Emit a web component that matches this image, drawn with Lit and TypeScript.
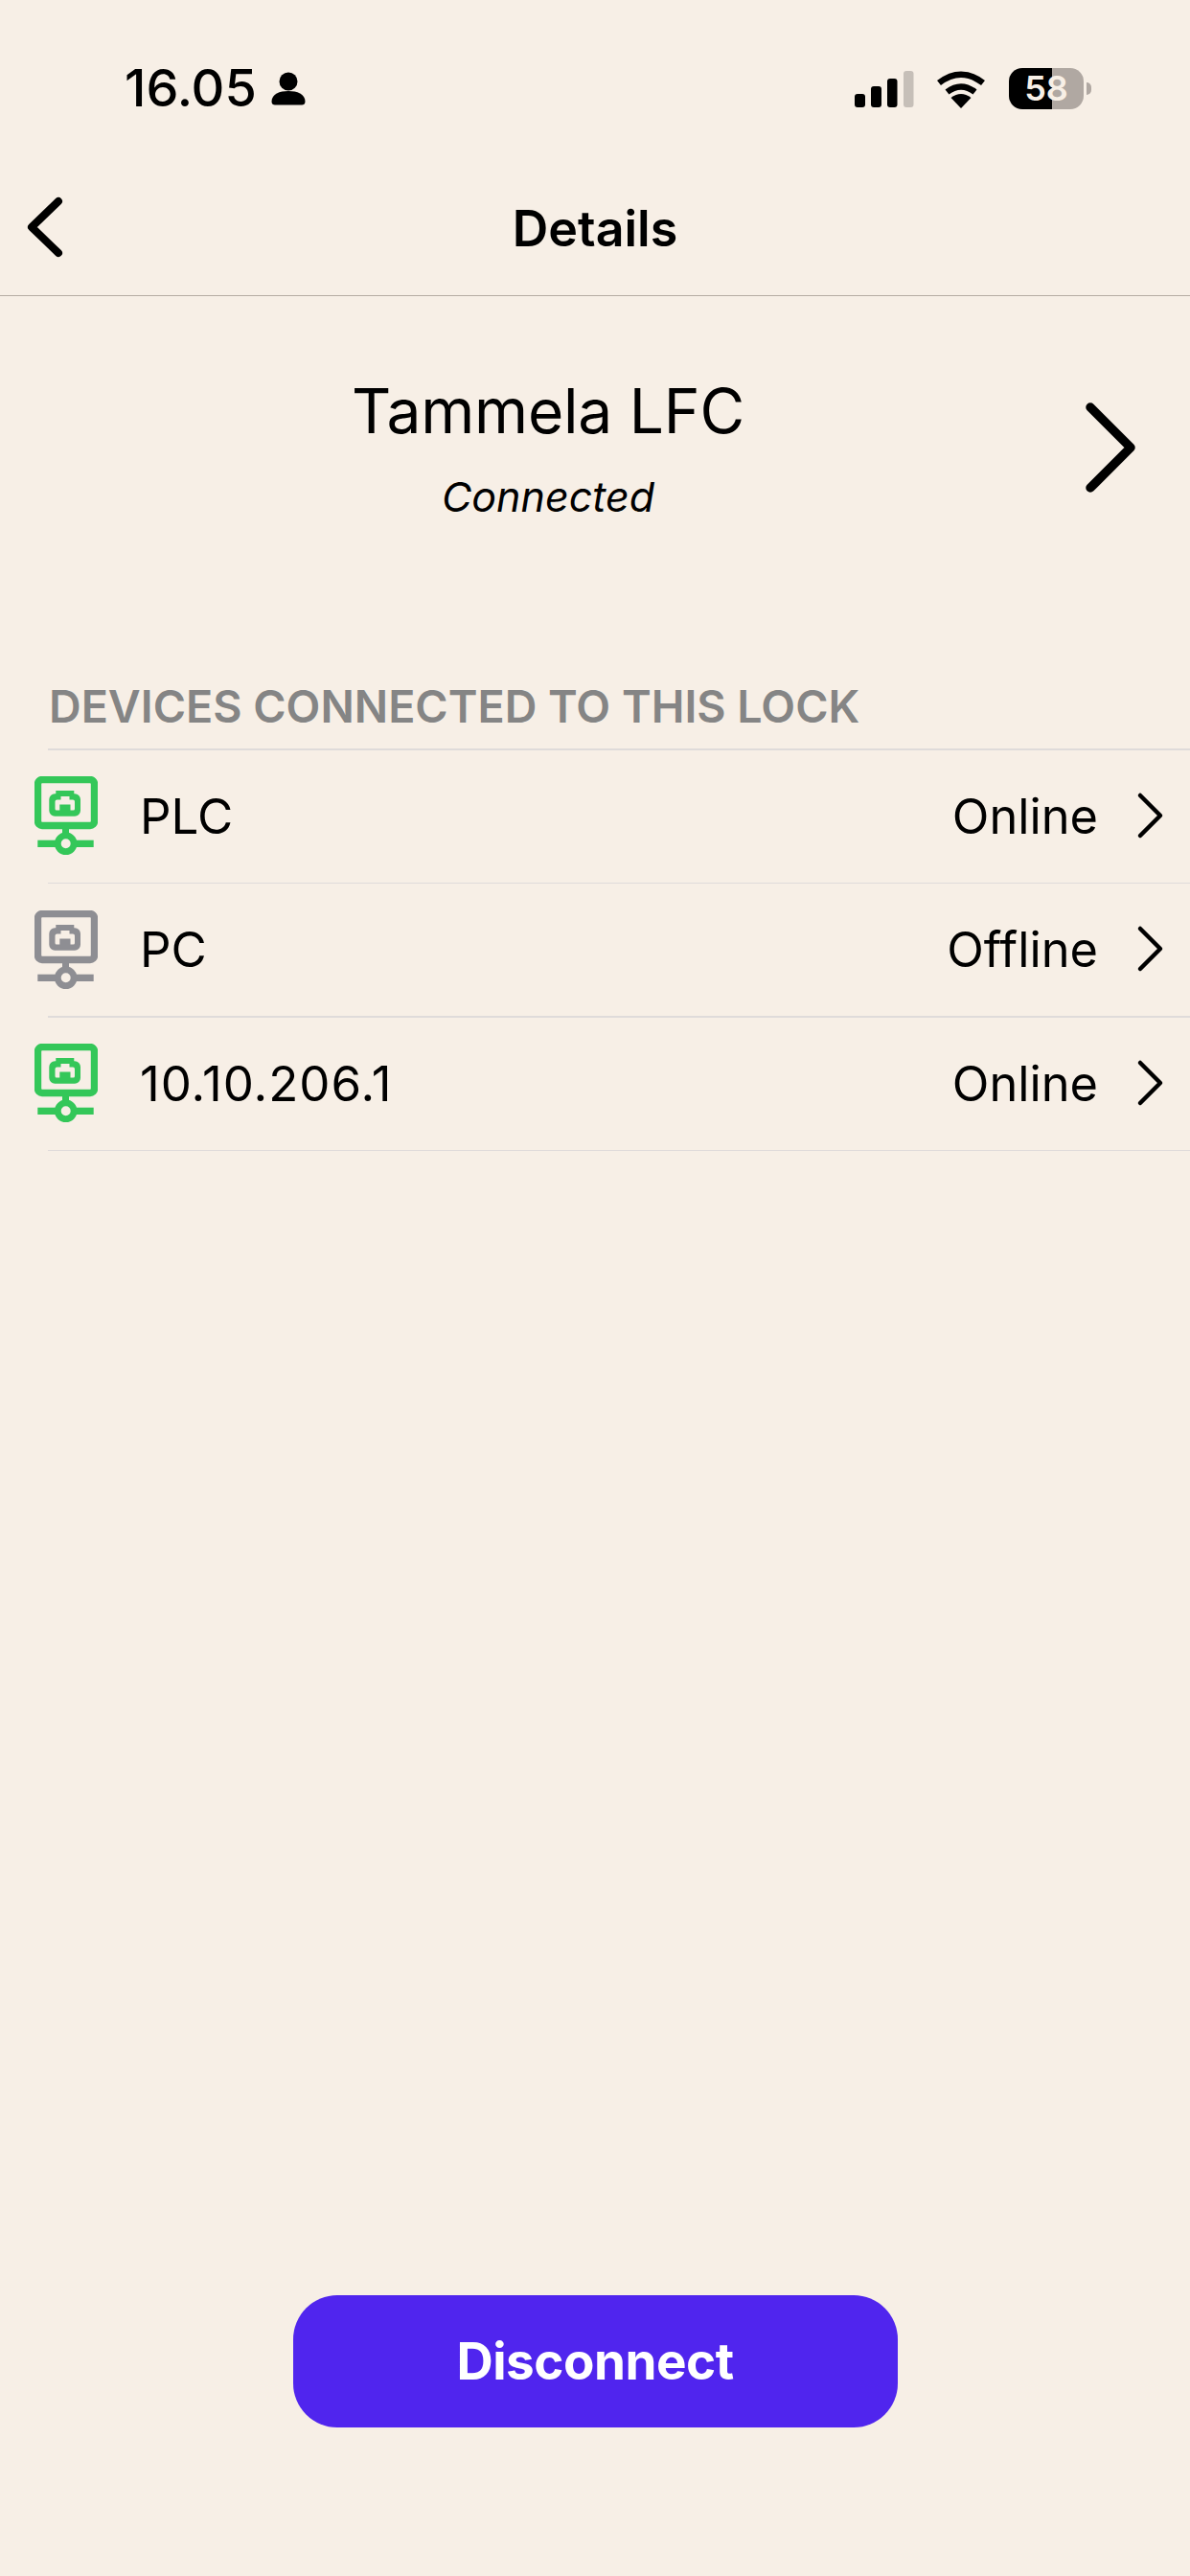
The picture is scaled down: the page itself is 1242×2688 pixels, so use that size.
import { LitElement, html, css, svg } from "lit";
import { customElement } from "lit/decorators.js";
import { classMap } from "lit/directives/class-map.js";

const chevron = (cls: string, d: string, sw: number, vb: string) => html`<svg class=${cls} viewBox=${vb} fill="none" stroke="#000" stroke-width=${sw} stroke-linecap="round" stroke-linejoin="round"><path d=${d}></path></svg>`;

const deviceIcon = (color: string) => html`<svg class="dev-icon" viewBox="0 0 66 84" fill="none">
  ${svg`
  <rect x="3.5" y="3.500" width="59" height="48" rx="4.500" stroke=${color} stroke-width="7.400"></rect>
  <rect x="29" y="54" width="7" height="12" fill=${color}></rect>
  <rect x="3.300" y="66.700" width="58.400" height="7.300" fill=${color}></rect>
  <circle cx="32.700" cy="70.300" r="8.400" fill="#F7EFE6" stroke=${color} stroke-width="6.800"></circle>
  <path fill=${color} fill-rule="evenodd" d="M22.300 15H41.300V18.300H42a6 6 0 0 1 6 6V35.700a6 6 0 0 1-6 6H21.300a6 6 0 0 1-6-6V24.300a6 6 0 0 1 6-6H22.300ZM27.500 21V24.500H23.500a2 2 0 0 0-2 2V34a1.500 1.500 0 0 0 1.500 1.500H26.300V29.500H37.500V35.500H40.500a1.500 1.500 0 0 0 1.500-1.500V26.500a2 2 0 0 0-2-2H36.500V21Z"></path>
  `}
</svg>`;

interface Device { name: string; status: string; online: boolean; numeric?: boolean; }

@customElement("app-root")
export class AppRoot extends LitElement {
  static styles = css`
    :host {
      display: flex;
      flex-direction: column;
      width: 1242px;
      min-height: 2688px;
      background: #f7efe6;
      color: #000;
      font-family: Inter, "Liberation Sans", sans-serif;
    }
    .status {
      display: flex;
      align-items: center;
      justify-content: space-between;
      box-sizing: border-box;
      height: 168px;
      padding: 60px 103px 44px 130px;
    }
    .status-left { display: flex; align-items: center; gap: 15px; }
    .time { font-size: 54px; font-weight: 500; line-height: 64px; }
    .person { width: 36px; height: 36px; margin-top: 2px; }
    .status-right { display: flex; align-items: center; }
    .signal { width: 62px; height: 38px; margin-top: 2px; }
    .wifi { width: 52px; height: 39px; margin-left: 23px; margin-top: 2px; }
    .battery {
      display: flex;
      align-items: center;
      justify-content: center;
      width: 78px;
      height: 43px;
      margin-left: 24px;
      border-radius: 14px;
      background: linear-gradient(to right, #000 58%, #b0a8a2 58%);
      color: #f7efe6;
      font-size: 36px;
      font-weight: 600;
    }
    .nub { width: 5px; height: 13px; margin-left: 3px; background: #b0a8a2; border-radius: 0 7px 7px 0; }
    .nav {
      display: flex;
      align-items: center;
      justify-content: center;
      box-sizing: border-box;
      height: 141px;
      border-bottom: 1.5px solid #b5aca3;
      position: relative;
    }
    .nav-title { font-size: 52px; font-weight: 600; }
    .back { position: absolute; left: 26px; top: 36px; width: 42px; height: 66px; }
    .lock {
      display: flex;
      align-items: center;
      padding-top: 80px;
    }
    .lock-text {
      display: flex;
      flex-direction: column;
      align-items: center;
      box-sizing: border-box;
      width: 1126px;
      padding-left: 18px;
    }
    .lock-name { font-size: 64px; font-weight: 400; line-height: 80px; letter-spacing: -0.2px; }
    .lock-state { font-size: 43px; font-style: italic; line-height: 52px; margin-top: 23px; }
    .lock-chev { width: 60px; height: 100px; margin-left: 3px; }
    .label {
      margin: 0;
      padding: 166px 0 0 51px;
      font-size: 46.600px;
      font-weight: 600;
      line-height: 54px;
      color: #858585;
    }
    .list { margin-top: 17px; }
    .row {
      display: flex;
      align-items: center;
      height: 139.500px;
      box-sizing: border-box;
      padding-left: 36px;
      position: relative;
    }
    .row::before {
      content: "";
      position: absolute;
      left: 50px;
      right: 0;
      top: 0;
      height: 1.500px;
      background: #dfdbda;
    }
    .row.last::after {
      content: "";
      position: absolute;
      left: 50px;
      right: 0;
      bottom: -1.500px;
      height: 1.500px;
      background: #dfdbda;
    }
    .dev-icon { width: 66px; height: 84px; flex: none; margin-top: 3px; }
    .dev-name { flex: 1; margin: 2px 0 0 44px; font-size: 51px; line-height: 60px; }
    .dev-name.numeric { letter-spacing: 1px; }
    .dev-status { margin-top: 2px; font-size: 50.500px; line-height: 60px; }
    .row-chev { width: 30px; height: 50px; margin: 0 26px 0 40px; }
    .spacer { flex: 1; }
    .footer { display: flex; justify-content: center; padding-bottom: 155px; }
    .disconnect {
      width: 631px;
      height: 138px;
      border: none;
      border-radius: 46px;
      background: #5025ee;
      color: #fff;
      font-family: inherit;
      font-size: 53px;
      font-weight: 700;
      letter-spacing: -0.5px;
    }
  `;

  private devices: Device[] = [
    { name: "PLC", status: "Online", online: true },
    { name: "PC", status: "Offline", online: false },
    { name: "10.10.206.1", status: "Online", online: true, numeric: true },
  ];

  render() {
    return html`
      <div class="status">
        <div class="status-left">
          <span class="time">16.05</span>
          <svg class="person" viewBox="0 0 36 36" fill="#000">
            <circle cx="18" cy="10" r="9.500"></circle>
            <path d="M0.500 31C0.500 23 9 20 18 20S35.500 23 35.500 31C35.500 33.500 34 34.500 32 34.500H4C2 34.500 .5 33.500 .5 31Z"></path>
          </svg>
        </div>
        <div class="status-right">
          <svg class="signal" viewBox="0 0 62 38">
            <rect x="0" y="24" width="11" height="14" rx="3"></rect>
            <rect x="17" y="16" width="11" height="22" rx="3"></rect>
            <rect x="34" y="8" width="10.500" height="30" rx="3"></rect>
            <rect x="51" y="0" width="10.500" height="38" rx="3" fill="#c6bfb8"></rect>
          </svg>
          <svg class="wifi" viewBox="0 0 52 39" fill="none">
            <path d="M3 12.500Q26 -5 49 12.500" stroke="#000" stroke-width="6.500"></path>
            <path d="M11.500 22Q26 11 40.500 22" stroke="#000" stroke-width="6.500"></path>
            <path d="M26 39L15.500 28Q26 20 36.500 28Z" fill="#000"></path>
          </svg>
          <div class="battery">58</div>
          <div class="nub"></div>
        </div>
      </div>
      <header class="nav">
        ${chevron("back", "M35 6L7 33L35 60", 8, "0 0 42 66")}
        <span class="nav-title">Details</span>
      </header>
      <section class="lock">
        <div class="lock-text">
          <span class="lock-name">Tammela LFC</span>
          <span class="lock-state">Connected</span>
        </div>
        ${chevron("lock-chev", "M9 8L51 50L9 92", 9.500, "0 0 60 100")}
      </section>
      <h2 class="label">DEVICES CONNECTED TO THIS LOCK</h2>
      <div class="list">
        ${this.devices.map((d, i) => html`
          <div class="row ${i === this.devices.length - 1 ? "last" : ""}">
            ${deviceIcon(d.online ? "#34c759" : "#8e8e93")}
            <span class=${classMap({ "dev-name": true, numeric: !!d.numeric })}>${d.name}</span>
            <span class="dev-status">${d.status}</span>
            ${chevron("row-chev", "M4 4L25 25L4 46", 4.500, "0 0 30 50")}
          </div>
        `)}
      </div>
      <div class="spacer"></div>
      <div class="footer">
        <button class="disconnect">Disconnect</button>
      </div>
    `;
  }
}
